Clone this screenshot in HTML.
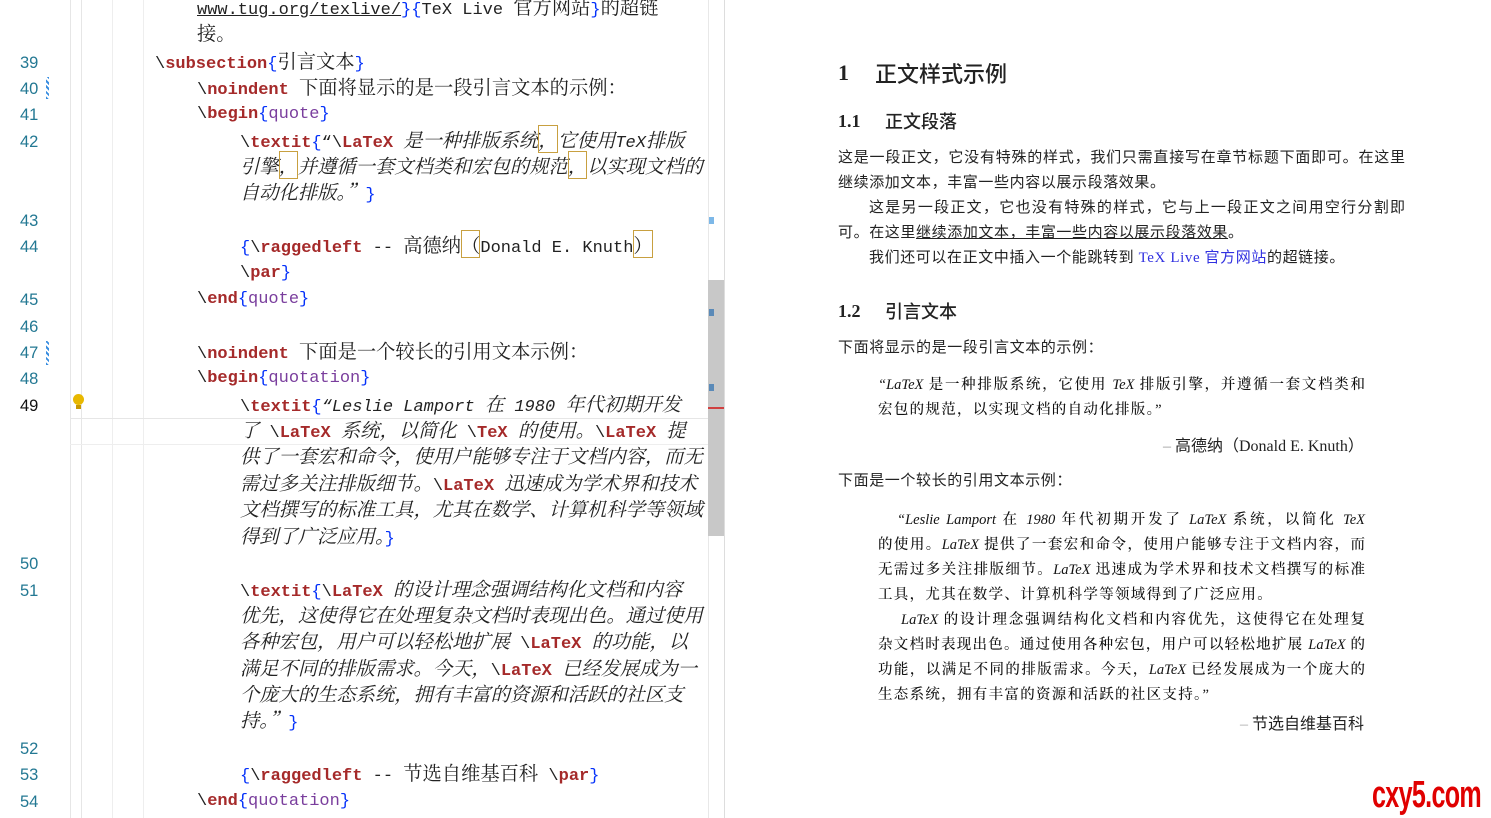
<!DOCTYPE html>
<html><head><meta charset="utf-8"><style>
body{margin:0;width:1491px;height:818px;overflow:hidden;background:#fff;position:relative;font-family:"Liberation Mono","Noto Serif CJK SC",monospace;}
.l{position:absolute;height:26px;line-height:26px;font-size:17px;color:#222;white-space:nowrap}
.n{position:absolute;left:20px;width:30px;font-size:16.5px;color:#237893;line-height:26px;font-family:"Liberation Sans",sans-serif}
.k{color:#a52a2a;font-weight:bold}
.b{color:#0431fa}
.a{color:#7a3e9d}
.c{font-size:19.3px;font-family:"Noto Serif CJK SC",serif;line-height:20px}
.i{font-style:italic}
.box{outline:1px solid #c8a040;outline-offset:-1px}
.vg{position:absolute;top:0;width:1px;height:818px;background:#e6e6e6}
.r{position:absolute;font-family:"Liberation Serif","Noto Sans CJK SC",serif;color:#222;white-space:nowrap}
.j{position:absolute;text-align:justify;text-align-last:justify;white-space:nowrap;font-family:"Liberation Serif","Noto Sans CJK SC",serif;color:#222}
.q{font-family:"Liberation Serif","Noto Serif CJK SC",serif;font-size:14.5px;color:#111;font-weight:500}
</style></head><body>
<div class="vg" style="left:70px"></div>
<div class="vg" style="left:81px"></div>
<div class="vg" style="left:112px;background:#eee"></div>
<div class="vg" style="left:143px;background:#eee"></div>
<div style="position:absolute;left:70px;top:418px;width:650px;height:1px;background:#e6e6e6"></div>
<div style="position:absolute;left:70px;top:444px;width:650px;height:1px;background:#eee"></div>
<div style="position:absolute;left:708px;top:0;width:1px;height:818px;background:#e8e8e8"></div>
<div style="position:absolute;left:708px;top:280px;width:16px;height:256px;background:#c8c8c8"></div>
<div style="position:absolute;left:709px;top:217px;width:5px;height:7px;background:#7db8e8"></div>
<div style="position:absolute;left:709px;top:309px;width:5px;height:7px;background:#5a8ab8"></div>
<div style="position:absolute;left:709px;top:384px;width:5px;height:7px;background:#5a8ab8"></div>
<div style="position:absolute;left:708px;top:407px;width:16px;height:2px;background:#d04040"></div>
<div style="position:absolute;left:724px;top:0;width:1px;height:818px;background:#ddd"></div>
<div style="position:absolute;left:46px;top:77px;width:3px;height:22px;background:repeating-linear-gradient(45deg,#3a8ee0 0 2px,#fff 2px 4px)"></div>
<div style="position:absolute;left:46px;top:341px;width:3px;height:24px;background:repeating-linear-gradient(45deg,#3a8ee0 0 2px,#fff 2px 4px)"></div>
<div style="position:absolute;left:73px;top:394px;width:11px;height:11px;border-radius:50%;background:#e8b800"></div>
<div style="position:absolute;left:76px;top:405px;width:5px;height:4px;background:#c89800"></div>

<div class="n" style="top:50px">39</div><div class="n" style="top:76px">40</div><div class="n" style="top:102px">41</div><div class="n" style="top:129px">42</div><div class="n" style="top:208px">43</div><div class="n" style="top:234px">44</div><div class="n" style="top:287px">45</div><div class="n" style="top:314px">46</div><div class="n" style="top:340px">47</div><div class="n" style="top:366px">48</div><div class="n" style="top:393px;color:#111">49</div><div class="n" style="top:551px">50</div><div class="n" style="top:578px">51</div><div class="n" style="top:736px">52</div><div class="n" style="top:762px">53</div><div class="n" style="top:789px">54</div>

<div class="l" style="left:197px;top:-4px"><span style="text-decoration:underline">www.tug.org/texlive/</span><span class="b">}{</span>TeX Live <span class="c">官方网站</span><span class="b">}</span><span class="c">的超链</span></div>
<div class="l" style="left:197px;top:22px"><span class="c">接。</span></div>
<div class="l" style="left:155px;top:50px">\<span class="k">subsection</span><span class="b">{</span><span class="c">引言文本</span><span class="b">}</span></div>
<div class="l" style="left:197px;top:76px">\<span class="k">noindent</span> <span class="c">下面将显示的是一段引言文本的示例：</span></div>
<div class="l" style="left:197px;top:102px">\<span class="k">begin</span><span class="b">{</span><span class="a">quote</span><span class="b">}</span></div>
<div class="l" style="left:240px;top:129px">\<span class="k">textit</span><span class="b">{</span>“\<span class="k">LaTeX</span> <span class="c i">是一种排版系统<span class="box">，</span>它使用</span><span class="i">TeX</span><span class="c i">排版</span></div>
<div class="l" style="left:240px;top:155px"><span class="c i">引擎<span class="box">，</span>并遵循一套文档类和宏包的规范<span class="box">，</span>以实现文档的</span></div>
<div class="l" style="left:240px;top:181px"><span class="c i">自动化排版。”</span><span class="b">}</span></div>
<div class="l" style="left:240px;top:234px"><span class="b">{</span>\<span class="k">raggedleft</span> -- <span class="c">高德纳<span class="box">（</span></span>Donald E. Knuth<span class="c box">）</span></div>
<div class="l" style="left:240px;top:261px">\<span class="k">par</span><span class="b">}</span></div>
<div class="l" style="left:197px;top:287px">\<span class="k">end</span><span class="b">{</span><span class="a">quote</span><span class="b">}</span></div>
<div class="l" style="left:197px;top:340px">\<span class="k">noindent</span> <span class="c">下面是一个较长的引用文本示例：</span></div>
<div class="l" style="left:197px;top:366px">\<span class="k">begin</span><span class="b">{</span><span class="a">quotation</span><span class="b">}</span></div>
<div class="l" style="left:240px;top:393px">\<span class="k">textit</span><span class="b">{</span><span class="i">“Leslie Lamport <span class="c">在</span> 1980 <span class="c">年代初期开发</span></span></div>
<div class="l" style="left:240px;top:419px"><span class="c i">了</span> \<span class="k">LaTeX</span> <span class="c i">系统，以简化</span> \<span class="k">TeX</span> <span class="c i">的使用。</span>\<span class="k">LaTeX</span> <span class="c i">提</span></div>
<div class="l" style="left:240px;top:445px"><span class="c i">供了一套宏和命令，使用户能够专注于文档内容，而无</span></div>
<div class="l" style="left:240px;top:472px"><span class="c i">需过多关注排版细节。</span>\<span class="k">LaTeX</span> <span class="c i">迅速成为学术界和技术</span></div>
<div class="l" style="left:240px;top:498px"><span class="c i">文档撰写的标准工具，尤其在数学、计算机科学等领域</span></div>
<div class="l" style="left:240px;top:525px"><span class="c i">得到了广泛应用。</span><span class="b">}</span></div>
<div class="l" style="left:240px;top:578px">\<span class="k">textit</span><span class="b">{</span>\<span class="k">LaTeX</span> <span class="c i">的设计理念强调结构化文档和内容</span></div>
<div class="l" style="left:240px;top:604px"><span class="c i">优先，这使得它在处理复杂文档时表现出色。通过使用</span></div>
<div class="l" style="left:240px;top:630px"><span class="c i">各种宏包，用户可以轻松地扩展</span> \<span class="k">LaTeX</span> <span class="c i">的功能，以</span></div>
<div class="l" style="left:240px;top:657px"><span class="c i">满足不同的排版需求。今天，</span>\<span class="k">LaTeX</span> <span class="c i">已经发展成为一</span></div>
<div class="l" style="left:240px;top:683px"><span class="c i">个庞大的生态系统，拥有丰富的资源和活跃的社区支</span></div>
<div class="l" style="left:240px;top:709px"><span class="c i">持。”</span><span class="b">}</span></div>
<div class="l" style="left:240px;top:762px"><span class="b">{</span>\<span class="k">raggedleft</span> -- <span class="c">节选自维基百科</span> \<span class="k">par</span><span class="b">}</span></div>
<div class="l" style="left:197px;top:789px">\<span class="k">end</span><span class="b">{</span><span class="a">quotation</span><span class="b">}</span></div>

<!-- right pane -->
<div class="r" style="left:838px;top:60px;font-size:22px;font-weight:bold">1</div>
<div class="r" style="left:875px;top:57px;font-size:22px;font-family:'Noto Sans CJK SC',sans-serif;font-weight:500">正文样式示例</div>
<div class="r" style="left:838px;top:111px;font-size:18px;font-weight:bold">1.1</div>
<div class="r" style="left:885px;top:108px;font-size:18px;font-family:'Noto Sans CJK SC',sans-serif;font-weight:500">正文段落</div>
<div class="j" style="left:838px;top:146px;width:567px;font-size:15px">这是一段正文，它没有特殊的样式，我们只需直接写在章节标题下面即可。在这里</div>
<div class="r" style="left:838px;top:171px;font-size:15px;letter-spacing:0.6px">继续添加文本，丰富一些内容以展示段落效果。</div>
<div class="j" style="left:869px;top:196px;width:536px;font-size:15px">这是另一段正文，它也没有特殊的样式，它与上一段正文之间用空行分割即</div>
<div class="r" style="left:838px;top:221px;font-size:15px;letter-spacing:0.6px">可。在这里<span style="text-decoration:underline">继续添加文本，丰富一些内容以展示段落效果</span>。</div>
<div class="r" style="left:869px;top:246px;font-size:15px;letter-spacing:0.6px">我们还可以在正文中插入一个能跳转到 <span style="color:#3030e0">TeX Live 官方网站</span>的超链接。</div>
<div class="r" style="left:838px;top:301px;font-size:18px;font-weight:bold">1.2</div>
<div class="r" style="left:885px;top:298px;font-size:18px;font-family:'Noto Sans CJK SC',sans-serif;font-weight:500">引言文本</div>
<div class="r" style="left:838px;top:336px;font-size:15px;letter-spacing:0.6px">下面将显示的是一段引言文本的示例：</div>
<div class="j q" style="left:878px;top:373px;width:487px"><i>“LaTeX</i> 是一种排版系统，它使用 <i>TeX</i> 排版引擎，并遵循一套文档类和</div>
<div class="r q" style="left:878px;top:398px;letter-spacing:1.3px">宏包的规范，以实现文档的自动化排版。”</div>
<div class="r" style="left:1163px;top:432px;font-size:16px"><span style="color:#999">–</span> 高德纳（Donald E. Knuth）</div>
<div class="r" style="left:838px;top:469px;font-size:15px;letter-spacing:0.6px">下面是一个较长的引用文本示例：</div>
<div class="j q" style="left:897px;top:508px;width:468px"><i>“Leslie Lamport</i> 在 <i>1980</i> 年代初期开发了 <i>LaTeX</i> 系统，以简化 <i>TeX</i></div>
<div class="j q" style="left:878px;top:533px;width:487px">的使用。<i>LaTeX</i> 提供了一套宏和命令，使用户能够专注于文档内容，而</div>
<div class="j q" style="left:878px;top:558px;width:487px">无需过多关注排版细节。<i>LaTeX</i> 迅速成为学术界和技术文档撰写的标准</div>
<div class="r q" style="left:878px;top:583px;letter-spacing:1.3px">工具，尤其在数学、计算机科学等领域得到了广泛应用。</div>
<div class="j q" style="left:901px;top:608px;width:464px"><i>LaTeX</i> 的设计理念强调结构化文档和内容优先，这使得它在处理复</div>
<div class="j q" style="left:878px;top:633px;width:487px">杂文档时表现出色。通过使用各种宏包，用户可以轻松地扩展 <i>LaTeX</i> 的</div>
<div class="j q" style="left:878px;top:658px;width:487px">功能，以满足不同的排版需求。今天，<i>LaTeX</i> 已经发展成为一个庞大的</div>
<div class="r q" style="left:878px;top:683px;letter-spacing:1.3px">生态系统，拥有丰富的资源和活跃的社区支持。”</div>
<div class="r" style="left:1240px;top:710px;font-size:16px"><span style="color:#aaa">–</span> 节选自维基百科</div>
<div style="position:absolute;left:1372px;top:776px;font-family:'Liberation Sans',sans-serif;font-weight:bold;font-size:38px;line-height:38px;color:#e00000;transform:scaleX(0.66);transform-origin:left;letter-spacing:-1px">cxy5.com</div>
</body></html>
